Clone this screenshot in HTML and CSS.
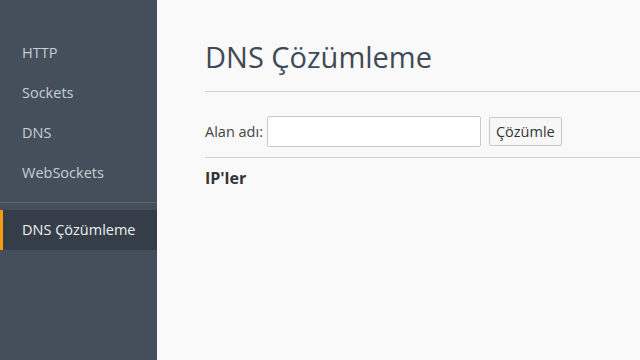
FILE: index.html
```html
<!DOCTYPE html>
<html lang="tr">
<head>
<meta charset="utf-8">
<link rel="stylesheet" href="styles.css">
</head>
<body>
<div class="app">
  <nav class="sidebar">
    <ul class="nav">
      <li><a>HTTP</a></li>
      <li><a>Sockets</a></li>
      <li><a>DNS</a></li>
      <li><a>WebSockets</a></li>
    </ul>
    <div class="sep"></div>
    <ul class="nav">
      <li class="active"><a>DNS Çözümleme</a></li>
    </ul>
  </nav>
  <main class="main">
    <h1 class="title">DNS Çözümleme</h1>
    <div class="form">
      <label class="label">Alan adı:</label>
      <input class="input" type="text">
      <button class="btn">Çözümle</button>
    </div>
    <h3 class="sub">IP'ler</h3>
  </main>
</div>
</body>
</html>
```
FILE: styles.css
```css
* { box-sizing: border-box; }
html, body { margin: 0; padding: 0; height: 100%; }
body {
  font-family: "Open Sans", "Noto Sans", sans-serif;
  font-size: 14px;
  color: #333;
  background: #f9f9f9;
}
.app { display: flex; height: 360px; }
.sidebar {
  width: 157px;
  flex: none;
  background: #444f5b;
  padding-top: 33px;
}
.nav { list-style: none; margin: 0; padding: 0; }
.nav li a {
  display: block;
  height: 40px;
  line-height: 40px;
  padding-left: 22px;
  color: #c9ced4;
  font-size: 14.5px;
}
.sep { height: 1px; background: #5b6671; margin: 9px 0 7px; }
.nav li.active a {
  background: #353e48;
  color: #eef0f2;
  border-left: 3px solid #f39c12;
  padding-left: 19px;
}
.main { flex: 1; padding: 0 0 0 48px; }
.title {
  margin: 0;
  padding-top: 37px;
  height: 92px;
  font-weight: 400;
  font-size: 29px;
  line-height: 40px;
  color: #3f4a56;
  border-bottom: 1px solid #d3d3d3;
}
.form {
  display: flex;
  align-items: center;
  height: 66px;
  padding-top: 14px;
  border-bottom: 1px solid #d3d3d3;
}
.label { color: #444; margin-right: 4px; font-size: 14.5px; }
.input {
  width: 214px; height: 31px;
  border: 1px solid #c8c8c8; border-radius: 2px;
  background: #fff;
  margin-right: 8px;
}
.btn {
  height: 29px;
  padding: 0 6px;
  font: inherit;
  font-size: 14.5px;
  color: #333;
  background: #f7f7f7;
  border: 1px solid #c8c8c8;
  border-radius: 2px;
}
.sub { margin: 9px 0 0; font-size: 16px; line-height: 22px; font-weight: 700; color: #333; }
```
